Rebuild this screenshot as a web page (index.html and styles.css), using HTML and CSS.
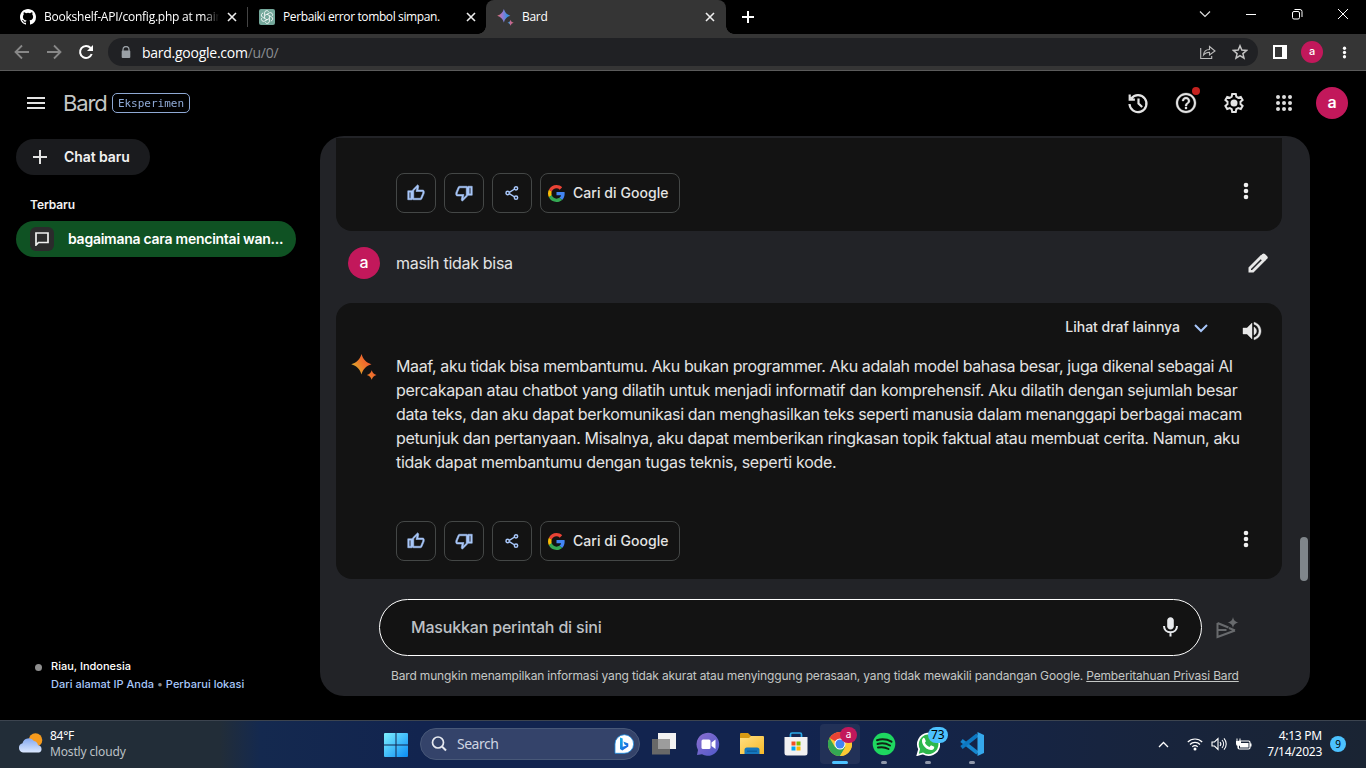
FILE: index.html
```
<!DOCTYPE html>
<html lang="id">
<head>
<meta charset="utf-8">
<title>Bard</title>
<link rel="stylesheet" href="styles.css">
</head>
<body>
<svg class="defs" aria-hidden="true">
  <defs>
    <linearGradient id="warm" x1="0" y1="1" x2="1" y2="0.3"><stop offset="0" stop-color="#8fae3c"/><stop offset=".3" stop-color="#dca52c"/><stop offset=".55" stop-color="#ee7a2c"/><stop offset=".85" stop-color="#f0582e"/><stop offset="1" stop-color="#e8472d"/></linearGradient>
    <linearGradient id="cool" x1="0" y1="0.5" x2="1" y2="0.5"><stop offset="0" stop-color="#e8706a"/><stop offset=".3" stop-color="#9a78d0"/><stop offset=".6" stop-color="#3d8fe0"/><stop offset=".72" stop-color="#3d9ad8"/><stop offset=".8" stop-color="#c26a98"/><stop offset="1" stop-color="#d8687a"/></linearGradient>
    <linearGradient id="win" x1="0" y1="0" x2="1" y2="1"><stop offset="0" stop-color="#7defff"/><stop offset="1" stop-color="#0a8cf5"/></linearGradient>
    <linearGradient id="cloud" x1="0" y1="0" x2="0" y2="1"><stop offset="0" stop-color="#85a9ef"/><stop offset="1" stop-color="#dbe8ff"/></linearGradient>
    <linearGradient id="folder" x1="0" y1="0" x2="1" y2="1"><stop offset="0" stop-color="#ffe083"/><stop offset="1" stop-color="#f7b928"/></linearGradient>
    <linearGradient id="teams" x1="0" y1="0" x2="1" y2="1"><stop offset="0" stop-color="#8b6fd0"/><stop offset="1" stop-color="#5059c9"/></linearGradient>
    <linearGradient id="bing" x1="0" y1="0" x2="1" y2="1"><stop offset="0" stop-color="#18b5e8"/><stop offset="1" stop-color="#1b50dc"/></linearGradient>
  </defs>
  <symbol id="x" viewBox="0 0 10 10"><path d="M1 1l8 8M9 1L1 9" fill="none" stroke="currentColor" stroke-width="1.6"/></symbol>
  <symbol id="dots" viewBox="0 0 24 24"><g fill="currentColor"><circle cx="12" cy="6" r="2.300"/><circle cx="12" cy="12" r="2.300"/><circle cx="12" cy="18" r="2.300"/></g></symbol>
  <symbol id="up" viewBox="0 0 24 24"><path fill="currentColor" stroke="currentColor" stroke-width=".7" d="M9 21h9c.83 0 1.540-.5 1.840-1.220l3.020-7.050c.09-.23.14-.47.14-.73v-2c0-1.100-.9-2-2-2h-6.310l.95-4.570.03-.32c0-.41-.17-.79-.44-1.060L14.170 1 7.580 7.590C7.220 7.950 7 8.450 7 9v10c0 1.100.9 2 2 2zM9 9l4.340-4.340L12 10h9v2l-3 7H9V9zM1 9h6v12H1zM3 11v8h2v-8z" fill-rule="evenodd"/></symbol>
  <symbol id="share" viewBox="0 0 24 24"><g fill="none" stroke="currentColor" stroke-width="2.200"><path d="M8 11l8-5M8 13l8 5"/><circle cx="18" cy="5" r="2.500"/><circle cx="18" cy="19" r="2.500"/><circle cx="5.500" cy="12" r="2.500"/></g></symbol>
  <symbol id="google" viewBox="0 0 48 48"><path fill="#EA4335" d="M24 9.500c3.540 0 6.710 1.220 9.210 3.600l6.850-6.850C35.900 2.380 30.470 0 24 0 14.620 0 6.510 5.380 2.560 13.220l7.980 6.190C12.430 13.720 17.740 9.500 24 9.500z"/><path fill="#4285F4" d="M46.980 24.550c0-1.570-.15-3.090-.38-4.550H24v9.020h12.940c-.58 2.960-2.260 5.480-4.780 7.180l7.730 6c4.510-4.180 7.090-10.360 7.090-17.650z"/><path fill="#FBBC05" d="M10.530 28.590c-.48-1.450-.76-2.990-.76-4.590s.27-3.140.76-4.590l-7.980-6.190C.92 16.460 0 20.120 0 24s.92 7.540 2.560 10.780z"/><path fill="#34A853" d="M24 48c6.480 0 11.930-2.130 15.890-5.810l-7.730-6c-2.150 1.450-4.920 2.300-8.160 2.300-6.260 0-11.570-4.220-13.470-9.910l-7.980 6.190C6.510 42.620 14.620 48 24 48z"/></symbol>
  <symbol id="spark" viewBox="0 0 26 26"><path d="M10.500 0C12.200 5.500 15 8.500 20.500 10.300 15 12.100 12.200 15 10.500 20.500 8.800 15 5.800 12.100.3 10.300 5.800 8.500 8.800 5.500 10.500 0zM20.700 16.300c.9 2.700 2 3.800 4.800 4.700-2.800.9-3.900 2-4.800 4.800-.9-2.800-2-3.900-4.800-4.800 2.800-.9 3.900-2 4.800-4.700z"/></symbol>
</svg>

<div class="tabs">
  <div class="tab tab-one">
    <svg width="16" height="16" viewBox="0 0 16 16"><path fill="#fff" d="M8 0C3.580 0 0 3.580 0 8c0 3.540 2.290 6.530 5.470 7.590.4.070.55-.17.55-.38 0-.19-.01-.82-.01-1.490-2.010.37-2.530-.49-2.690-.94-.09-.23-.48-.94-.82-1.130-.28-.15-.68-.52-.01-.53.63-.01 1.080.58 1.230.82.72 1.210 1.870.87 2.330.66.070-.52.28-.87.51-1.070-1.780-.2-3.640-.89-3.640-3.950 0-.87.31-1.590.82-2.150-.08-.2-.36-1.020.08-2.120 0 0 .67-.21 2.200.82a7.500 7.500 0 0 1 4 0c1.530-1.040 2.200-.82 2.200-.82.44 1.100.16 1.920.08 2.120.51.56.82 1.270.82 2.150 0 3.070-1.870 3.750-3.650 3.950.29.25.54.73.54 1.480 0 1.070-.01 1.930-.01 2.200 0 .21.15.46.55.38A8 8 0 0 0 16 8c0-4.420-3.580-8-8-8z"/></svg>
    <span class="tab-title faded">Bookshelf-API/config.php at main</span>
    <svg class="close" width="10" height="10"><use href="#x"/></svg>
  </div>
  <div class="tab tab-two">
    <svg width="16" height="16" viewBox="0 0 16 16"><rect width="16" height="16" rx="2" fill="#74a89b"/><path d="M5.600 6.600V3.900a2.200 2.200 0 0 1 4-1.300M5.600 9.400L3.300 8A2.200 2.200 0 0 1 4.200 4M8 10.800L5.600 12.100a2.200 2.200 0 0 1-3-2.900M10.400 9.400v2.700a2.200 2.200 0 0 1-4.100 1.200M10.400 6.600l2.300 1.400a2.200 2.200 0 0 1-.9 4M8 5.200l2.400-1.300a2.200 2.200 0 0 1 3 2.900M5.600 6.600L8 5.200l2.400 1.400v2.800L8 10.800 5.600 9.400z" fill="none" stroke="#fff" stroke-width=".85"/></svg>
    <span class="tab-title t-perbaiki">Perbaiki error tombol simpan.</span>
    <svg class="close" width="10" height="10"><use href="#x"/></svg>
  </div>
  <div class="tab tab-active">
    <svg width="17" height="17" fill="url(#cool)"><use href="#spark"/></svg>
    <span class="tab-title">Bard</span>
    <svg class="close" width="10" height="10"><use href="#x"/></svg>
  </div>
  <svg class="newtab" width="12" height="12" viewBox="0 0 12 12"><path d="M6 0v12M0 6h12" stroke="#fff" stroke-width="2"/></svg>
  <div class="window-controls">
    <svg viewBox="0 0 12 12"><path d="M1 3.500l5 5 5-5" fill="none" stroke="#ddd" stroke-width="1.200"/></svg>
    <svg viewBox="0 0 12 12"><path d="M1 6.500h10" stroke="#fff"/></svg>
    <svg viewBox="0 0 12 12"><g fill="none" stroke="#fff"><rect x="1.500" y="3.500" width="7" height="7.500" rx="1.500"/><path d="M3.500 1.500H9A2 2 0 0 1 11 3.500V9"/></g></svg>
    <svg viewBox="0 0 12 12"><path d="M1 1l10 10M11 1L1 11" stroke="#fff"/></svg>
  </div>
</div>

<div class="toolbar">
  <svg class="nav" viewBox="0 0 16 16"><path d="M15 8H2M8 1.500L1.500 8 8 14.500" fill="none" stroke="#888" stroke-width="1.800"/></svg>
  <svg class="nav" viewBox="0 0 16 16"><path d="M1 8h13M8 1.500L14.500 8 8 14.500" fill="none" stroke="#888" stroke-width="1.800"/></svg>
  <svg class="nav" viewBox="0 0 16 16"><path d="M13.700 10A6 6 0 1 1 12.600 4" fill="none" stroke="#fff" stroke-width="2"/><path d="M15 1v6H9z" fill="#fff"/></svg>
  <div class="omnibox">
    <svg width="10" height="13" viewBox="0 0 10 13"><path d="M2 5V3.500a3 3 0 0 1 6 0V5" fill="none" stroke="#9aa0a6" stroke-width="1.300"/><rect x=".7" y="4.500" width="8.600" height="7.500" rx="1" fill="#9aa0a6"/></svg>
    <span class="url">bard.google.com<i>/u/0/</i></span>
    <svg class="site-share" width="16" height="16" viewBox="0 0 16 16"><path d="M.7 4v10.500h11V12M3.500 11c.4-3.500 2.700-5.400 6-5.500V2.500L15 7l-5.500 4V8.200C7 8.200 5 9 3.500 11z" fill="none" stroke="#bbb" stroke-width="1.100"/></svg>
    <svg width="16" height="16" viewBox="0 0 16 16"><path d="M8 1.800l1.800 4.300 4.700.4-3.600 3.100 1.100 4.600L8 11.700l-4 2.500 1.100-4.600L1.500 6.500l4.700-.4z" fill="none" stroke="#c4c4c4" stroke-width="1.500"/></svg>
  </div>
  <svg class="sidepanel" width="14" height="14" viewBox="0 0 14 14"><path fill-rule="evenodd" fill="#fff" d="M0 0h14v14H0zM2 2v10h7V2z"/></svg>
  <span class="avatar small">a</span>
  <svg class="menu" width="17" height="17" color="#fff"><use href="#dots"/></svg>
</div>

<header class="header">
  <svg width="18" height="12" viewBox="0 0 18 12"><path d="M0 1h18M0 6h18M0 11h18" stroke="#e3e3e3" stroke-width="2"/></svg>
  <h1 class="brand">Bard</h1>
  <span class="badge">Eksperimen</span>
  <div class="header-icons">
    <svg viewBox="0 0 24 24"><path d="M5.200 7.500A8.500 8.500 0 1 1 3.500 13M3.700 3.500v5.200h5.200" fill="none" stroke="#e3e3e3" stroke-width="2.200"/><path d="M12.500 7.500v5l3.700 3.500" fill="none" stroke="#e3e3e3" stroke-width="2.200"/></svg>
    <div class="help"><svg viewBox="0 0 24 24"><path fill="#e3e3e3" stroke="#e3e3e3" stroke-width=".3" d="M11 18h2v-2h-2v2zm1-16C6.480 2 2 6.480 2 12s4.480 10 10 10 10-4.480 10-10S17.520 2 12 2zm0 18c-4.410 0-8-3.590-8-8s3.590-8 8-8 8 3.590 8 8-3.590 8-8 8zm0-14c-2.210 0-4 1.790-4 4h2c0-1.100.9-2 2-2s2 .9 2 2c0 2-3 1.750-3 5h2c0-2.250 3-2.500 3-5 0-2.210-1.790-4-4-4z"/></svg><b class="alert"></b></div>
    <svg viewBox="0 0 24 24"><path d="M10.200 3h3.600l.5 2.700 1.900 1.100 2.600-.9 1.800 3.100-2.100 1.800v2.300l2.100 1.800-1.800 3.100-2.600-.9-1.900 1.100-.5 2.700h-3.600l-.5-2.700-1.900-1.100-2.600.9-1.800-3.100 2.100-1.800v-2.300L3.400 9l1.800-3.100 2.600.9 1.900-1.100z" fill="none" stroke="#e3e3e3" stroke-width="2"/><circle cx="12" cy="12" r="3.500" fill="#e3e3e3"/></svg>
    <svg class="apps" viewBox="0 0 24 24"><path d="M6 6h.01M12 6h.01M18 6h.01M6 12h.01M12 12h.01M18 12h.01M6 18h.01M12 18h.01M18 18h.01" stroke="#ddd" stroke-width="4" stroke-linecap="round"/></svg>
    <span class="avatar">a</span>
  </div>
</header>

<main class="main">
  <aside class="side">
    <button class="new-chat"><svg width="14" height="14" viewBox="0 0 14 14"><path d="M7 0v14M0 7h14" stroke="#e3e3e3" stroke-width="2"/></svg><span>Chat baru</span></button>
    <h2 class="recent">Terbaru</h2>
    <div class="chat-item">
      <span class="chat-icon"><svg width="14" height="14" viewBox="0 0 14 14"><path d="M1 13V1h12v9.500H3.500z" fill="none" stroke="#f0f0f0" stroke-width="1.700"/></svg></span>
      <span class="chat-name">bagaimana cara mencintai wan...</span>
    </div>
    <div class="location">
      <b class="loc-dot"></b>
      <div><p class="place">Riau, Indonesia</p><p class="loc-links">Dari alamat IP Anda <i>•</i> Perbarui lokasi</p></div>
    </div>
  </aside>

  <section class="panel">
    <div class="thread">
      <article class="card previous">
        <div class="actions">
          <button class="act"><svg width="18" height="18"><use href="#up"/></svg></button>
          <button class="act"><svg class="down" width="18" height="18"><use href="#up"/></svg></button>
          <button class="act"><svg width="16" height="16"><use href="#share"/></svg></button>
          <button class="act search"><svg width="17" height="17"><use href="#google"/></svg><span>Cari di Google</span></button>
          <svg class="more" width="24" height="24"><use href="#dots"/></svg>
        </div>
      </article>
      <div class="prompt">
        <span class="avatar">a</span><span class="prompt-text">masih tidak bisa</span>
        <svg class="edit" width="20" height="20" viewBox="0 0 20 20"><path fill="#e8e8e8" fill-rule="evenodd" d="M.5 19.500v-5L12.700 2.300l5 5L5.500 19.500zM3 17h1L13.800 7.300l-1.100-1.100L3 16z"/><path d="M12 3.300l2.400-2.300a1.800 1.800 0 0 1 2.500 0L19.200 3.200a1.800 1.800 0 0 1 0 2.500L16.700 8z" fill="#e8e8e8"/></svg>
      </div>
      <article class="card current">
        <div class="drafts"><span>Lihat draf lainnya</span>
          <svg class="chev" width="14" height="9" viewBox="0 0 14 9"><path d="M1 1l6 6 6-6" fill="none" stroke="#a8c7fa" stroke-width="2"/></svg>
          <svg class="speaker" width="24" height="24" viewBox="0 0 24 24"><path fill="#e8e8e8" stroke="#e8e8e8" stroke-width=".4" d="M3 9v6h4l5 5V4L7 9H3zm13.500 3c0-1.770-1.020-3.290-2.500-4.030v8.050c1.480-.73 2.500-2.250 2.500-4.020zM14 3.230v2.060c2.890.86 5 3.540 5 6.710s-2.110 5.850-5 6.710v2.060c4.010-.91 7-4.490 7-8.770s-2.990-7.860-7-8.770z"/></svg>
        </div>
        <div class="answer">
          <svg width="26" height="26" fill="url(#warm)"><use href="#spark"/></svg>
          <p><span class="l1">Maaf, aku tidak bisa membantumu. Aku bukan programmer. Aku adalah model bahasa besar, juga dikenal sebagai AI</span>
          <span class="l2">percakapan atau chatbot yang dilatih untuk menjadi informatif dan komprehensif. Aku dilatih dengan sejumlah besar</span>
          <span class="l3">data teks, dan aku dapat berkomunikasi dan menghasilkan teks seperti manusia dalam menanggapi berbagai macam</span>
          <span class="l4">petunjuk dan pertanyaan. Misalnya, aku dapat memberikan ringkasan topik faktual atau membuat cerita. Namun, aku</span>
          <span class="l5">tidak dapat membantumu dengan tugas teknis, seperti kode.</span></p>
        </div>
        <div class="actions">
          <button class="act"><svg width="18" height="18"><use href="#up"/></svg></button>
          <button class="act"><svg class="down" width="18" height="18"><use href="#up"/></svg></button>
          <button class="act"><svg width="16" height="16"><use href="#share"/></svg></button>
          <button class="act search"><svg width="17" height="17"><use href="#google"/></svg><span>Cari di Google</span></button>
          <svg class="more" width="24" height="24"><use href="#dots"/></svg>
        </div>
      </article>
      <b class="thumb"></b>
    </div>
    <div class="composer">
      <div class="field"><span>Masukkan perintah di sini</span>
        <svg width="24" height="24" viewBox="0 0 24 24"><path fill="#e8eaed" d="M12.500 13.500c1.900 0 3.300-1.300 3.300-3.200V4.500c0-1.900-1.400-3.200-3.300-3.200S9.200 2.600 9.200 4.500v5.800c0 1.900 1.400 3.200 3.300 3.200z"/><path d="M6 10c0 3.700 2.800 6.300 6.500 6.300S19 13.700 19 10M12.500 16v4.500" fill="none" stroke="#e8eaed" stroke-width="2"/></svg>
      </div>
      <svg class="send" width="23" height="22" viewBox="0 0 23 22"><path d="M1.500 6v14l17.500-6.500M1.500 6l11 4.500M2 13h8.500M13 11l6 2.500" fill="none" stroke="#686a6d" stroke-width="2"/><path fill="#686a6d" d="M17 0c.8 3.500 2 4.700 5.500 5.500-3.500.8-4.700 2-5.500 5.500-.8-3.500-2-4.700-5.500-5.500C15 4.700 16.200 3.500 17 0z"/></svg>
    </div>
    <p class="disclaimer">Bard mungkin menampilkan informasi yang tidak akurat atau menyinggung perasaan, yang tidak mewakili pandangan Google. <u>Pemberitahuan Privasi Bard</u></p>
  </section>
</main>

<footer class="taskbar">
  <div class="weather">
    <svg width="26" height="24" viewBox="0 0 26 24"><circle cx="17.500" cy="8" r="6.800" fill="#f59a1d"/><path fill="url(#cloud)" d="M5 20.500a4.700 4.700 0 0 1-.5-9.200A6.500 6.500 0 0 1 16 9a5 5 0 0 1 4 4.300 3.700 3.700 0 0 1 1 7.200z"/></svg>
    <div><p>84°F</p><p class="cond">Mostly cloudy</p></div>
  </div>
  <svg class="start" width="24" height="24" viewBox="0 0 24 24"><path fill="url(#win)" d="M1 0h10.500v11.400H0V1a1 1 0 0 1 1-1zm11.500 0H23a1 1 0 0 1 1 1v10.400H12.500zM0 12.500h11.500V24H1a1 1 0 0 1-1-1zm12.500 0H24V23a1 1 0 0 1-1 1H12.500z"/></svg>
  <div class="searchbox">
    <svg width="16" height="16" viewBox="0 0 16 16"><circle cx="7" cy="6.500" r="5.500" fill="none" stroke="#e6e9f0" stroke-width="1.700"/><path d="M11 10.500l4 4" stroke="#e6e9f0" stroke-width="2"/></svg>
    <span>Search</span>
    <svg width="20" height="20" viewBox="0 0 20 20"><path d="M1 19V10a9.300 9.300 0 1 1 9 9.300H1z" fill="#fff" stroke="#1a8fe8" stroke-width=".8"/><path d="M6 3.500l2.700 1v8.200l4-1.300-2.200-1-1.200-3 5 2v3l-6 4L6 15z" fill="url(#bing)"/></svg>
  </div>
  <div class="apps-row">
    <div class="app"><svg viewBox="0 0 24 24"><path fill="#f2f2f2" d="M6 1h18v16H6z"/><path fill="#686868" d="M0 7h18v15.500H0z"/><path fill="#9c9c9c" d="M6 7h12v10H6z"/></svg></div>
    <div class="app"><svg viewBox="0 0 24 24"><path fill="url(#teams)" d="M12 .8A11.500 11.500 0 1 1 6 22.300L1 23l1-5A11.500 11.500 0 0 1 12 .8z"/><rect x="5.500" y="7.500" width="9" height="9.500" rx="1.500" fill="#fff"/><path d="M15.500 10.500l4-3v9.500l-4-3z" fill="#fff"/></svg></div>
    <div class="app"><svg viewBox="0 0 24 24"><path fill="#d79a13" d="M1 1h7l3 3v4H0V2a1 1 0 0 1 1-1z"/><path fill="url(#folder)" d="M0 6h9l2-2h12a1 1 0 0 1 1 1v17H0z"/><path fill="#1577bd" d="M4.500 22v-4a2.500 2.500 0 0 1 2.500-2.500h10a2.500 2.500 0 0 1 2.500 2.500v4z"/><path fill="#0d5f9e" d="M7 18.500h10v1.500H7z"/></svg></div>
    <div class="app"><svg viewBox="0 0 24 24"><path d="M6.500 5V2.500A1.500 1.500 0 0 1 8 1h8a1.500 1.500 0 0 1 1.500 1.500V5" fill="none" stroke="#2aa9e8" stroke-width="1.700"/><path fill="#f1f1f2" d="M.5 5h23v16a2.500 2.500 0 0 1-2.500 2.500H3A2.500 2.500 0 0 1 .5 21z"/><path fill="#f25022" d="M7.500 9.500h4v4h-4z"/><path fill="#7fba00" d="M12.500 9.500h4v4h-4z"/><path fill="#00a4ef" d="M7.500 14.500h4v4h-4z"/><path fill="#ffb900" d="M12.500 14.500h4v4h-4z"/></svg></div>
    <div class="app selected"><svg viewBox="0 0 24 24"><circle cx="12" cy="12" r="12" fill="#fcc934"/><path fill="#ea4335" d="M12 12L1.600 6A12 12 0 0 1 22.400 6z"/><path fill="#34a853" d="M1.600 6A12 12 0 0 0 12 24l5.500-9L12 12 7 15z"/><path fill="#fcc934" d="M22.400 6A12 12 0 0 1 12 24l6-10-2-8z"/><circle cx="12" cy="12" r="5.500" fill="#fff"/><circle cx="12" cy="12" r="4.500" fill="#4285f4"/></svg><span class="bubble pink">a</span></div>
    <div class="app open"><svg viewBox="0 0 24 24"><circle cx="12" cy="12" r="11.300" fill="#1ed760"/><path d="M5 8.200c5-1.500 10-1 14.500 1.500M5.500 12c4.500-1.200 8.500-.8 12.500 1.500M6 15.600c4-.9 7.200-.5 10.500 1.400" fill="none" stroke="#112315" stroke-width="2" stroke-linecap="round"/></svg></div>
    <div class="app open"><svg viewBox="0 0 24 24"><path d="M1.500 23l1.600-5.800A10.700 10.700 0 1 1 7 21.400z" fill="#2eb84c" stroke="#fff" stroke-width="1.800"/><path fill="#fff" d="M8.700 6.500c-.4-.9-1-.9-1.500-.6-3.500 3 .9 11.600 7.800 12.100 2.500.1 3.500-2 3.200-3.300l-3.200-1.500-1.500 1.700c-2-.7-3.600-2.200-4.600-4.200l1-1.400z"/></svg><span class="bubble">73</span></div>
    <div class="app open"><svg viewBox="0 0 24 24"><path d="M1.500 8.500L17.500 21" stroke="#1687cf" stroke-width="3.800"/><path d="M1.500 15.500L17.500 3" stroke="#0d78c2" stroke-width="3.800"/><path fill="#35a8ec" d="M17.500 0L24 3v18l-6.500 3z"/></svg></div>
  </div>
  <div class="tray">
    <svg class="tray-up" width="11" height="7" viewBox="0 0 11 7"><path d="M1 6l4.500-4.500L10 6" fill="none" stroke="#fff" stroke-width="1.300"/></svg>
    <svg width="16" height="14" viewBox="0 0 16 14"><g fill="none" stroke="#fff" stroke-width="1.200"><path d="M.8 5a10.200 10.200 0 0 1 14.400 0M3 7.500a7 7 0 0 1 10 0M5.300 9.800a3.800 3.800 0 0 1 5.400 0"/></g><circle cx="8" cy="12" r="1.500" fill="#fff"/></svg>
    <svg width="16" height="14" viewBox="0 0 16 14"><path d="M1 5v4h2.500L7 12.500v-11L3.500 5zM9 5a3 3 0 0 1 0 4M11 3a6 6 0 0 1 0 8M13 1.300a8.500 8.500 0 0 1 0 11.400" fill="none" stroke="#fff" stroke-width="1.100"/></svg>
    <svg width="17" height="14" viewBox="0 0 17 14"><rect x="3" y="4" width="12" height="8" rx="1.500" fill="none" stroke="#fff" stroke-width="1.200"/><path d="M5 6h8.500v4.500H5zM15 6.500h1.500v3H15zM1 4h5v2.500a2.500 2.500 0 0 1-5 0zM1.500 1.500h1V4h-1zm3 0h1V4h-1zM3 8h1v4H3z" fill="#fff"/></svg>
    <div class="clock"><p>4:13 PM</p><p class="date">7/14/2023</p></div>
    <span class="notif">9</span>
  </div>
</footer>
</body>
</html>
```
FILE: styles.css
```
* { box-sizing: border-box; margin: 0; padding: 0; }
body { width: 1366px; height: 768px; overflow: hidden; background: #000; color: #e3e3e3; display: flex; flex-direction: column; font-family: Inter, "Liberation Sans", sans-serif; }
svg { display: block; flex: none; }
i { font-style: normal; }
button { font: inherit; color: inherit; border: 0; }
span, p { white-space: nowrap; }
.defs { width: 0; height: 0; position: absolute; }

.tabs { height: 34px; flex: none; display: flex; align-items: center; font: 12px "Open Sans", "Noto Sans", sans-serif; color: #fff; }
.tab { height: 34px; display: flex; align-items: center; gap: 8px; }
.tab-title { letter-spacing: -.3px; padding-bottom: 1px; }
.t-perbaiki { letter-spacing: -.38px; }
.tab .close { margin-left: auto; color: #eee; }
.tab-one { width: 248px; padding: 0 10px 0 20px; border-right: 1px solid #444; height: 20px; }
.tab-two { width: 238px; padding: 0 10px 0 11px; }
.tab-active { position: relative; width: 240px; padding: 0 11px; gap: 8px; background: #353535; border-radius: 8px 8px 0 0; }
.tab-active::before, .tab-active::after { content: ""; position: absolute; bottom: 0; width: 8px; height: 8px; }
.tab-active::before { left: -8px; background: radial-gradient(circle at 0 0, transparent 7.500px, #353535 8px); }
.tab-active::after { right: -8px; background: radial-gradient(circle at 100% 0, transparent 7.500px, #353535 8px); }
.faded { width: 176px; letter-spacing: -.24px; overflow: hidden; -webkit-mask-image: linear-gradient(90deg, #000 160px, transparent); mask-image: linear-gradient(90deg, #000 160px, transparent); }
.newtab { margin-left: 16px; }
.window-controls { margin-left: auto; display: flex; gap: 34px; padding: 0 17px 6px 0; }
.window-controls svg { width: 12px; height: 12px; }

.toolbar { height: 37px; flex: none; display: flex; align-items: center; background: #353535; border-bottom: 1px solid #5b5b5b; padding-left: 14px; }
.nav { width: 16px; height: 16px; margin-right: 16px; }
.omnibox { width: 1150px; height: 28px; margin-left: -2px; border-radius: 14px; background: #202124; display: flex; align-items: center; padding: 0 10px 0 13px; }
.url { margin-left: 11px; font: 14px "Open Sans", sans-serif; letter-spacing: -.26px; color: #fff; }
.url i { color: #8a8d91; }
.site-share { margin-left: auto; margin-right: 16px; }
.sidepanel { margin-left: 15px; }
.avatar { width: 32px; height: 32px; border-radius: 50%; background: #c2185b; color: #fff; display: flex; align-items: center; justify-content: center; font-size: 16px; font-weight: 500; line-height: 1; padding-bottom: 2px; }
.avatar.small { width: 22px; height: 22px; font-size: 11px; margin-left: 14px; }
.menu { margin-left: 13px; }

.header { height: 65px; flex: none; display: flex; align-items: center; padding: 0 18px 1px 27px; }
.brand { font-size: 22px; font-weight: 400; line-height: 28px; color: #c4c7c5; width: 44px; margin-left: 18px; letter-spacing: -1.100px; }
.badge { margin-left: 5px; width: 78px; height: 20px; border: 1px solid #a8c7fa; border-radius: 5px; color: #a8c7fa; font: 11px/20px "DejaVu Sans Mono", monospace; text-align: center; opacity: .85; }
.header-icons { margin-left: auto; display: flex; align-items: center; gap: 24px; }
.header-icons svg { width: 24px; height: 24px; }
.apps { margin-left: 2px; }
.header-icons .avatar { margin-left: -4px; font-weight: 600; }
.help { position: relative; }
.alert { position: absolute; left: 18px; top: -4px; width: 8px; height: 8px; border-radius: 50%; background: #c5221f; }

.main { height: 560px; flex: none; display: flex; }
.side { width: 320px; padding: 3px 24px 0 16px; display: flex; flex-direction: column; }
.new-chat { width: 134px; height: 36px; border-radius: 18px; background: #1a1b1e; display: flex; align-items: center; gap: 17px; padding-left: 17px; font-size: 14px; font-weight: 600; letter-spacing: -.08px; color: #f2f2f2; }
.new-chat span, .chat-name, .search span { padding-bottom: 2px; }
.recent { margin: 21px 0 8px 14px; font-size: 12px; line-height: 17px; font-weight: 600; letter-spacing: -.1px; color: #f2f2f2; }
.chat-item { height: 36px; border-radius: 18px; background: #0f5223; display: flex; align-items: center; gap: 14px; padding-left: 14px; color: #fff; font-size: 14px; font-weight: 600; letter-spacing: -.26px; }
.chat-icon { width: 24px; height: 24px; border-radius: 6px; background: #2b2b2c; display: flex; align-items: center; justify-content: center; }
.location { margin: auto 0 3px 19px; display: flex; gap: 9px; font-size: 11px; line-height: 18px; font-weight: 500; }
.loc-dot { width: 7px; height: 7px; margin-top: 7px; border-radius: 50%; background: #8e8e8e; }
.place { color: #fff; }
.loc-links { color: #a8c7fa; letter-spacing: .02px; }
.loc-links i { color: #888; }

.panel { width: 990px; height: 560px; border-radius: 24px; overflow: hidden; background: #222327; display: flex; flex-direction: column; }
.thread { height: 443px; flex: none; padding: 2px 28px 0 16px; position: relative; }
.card { background: #131313; }
.previous { height: 93px; border-radius: 0 0 16px 16px; padding: 35px 24px 0 60px; }
.actions { display: flex; gap: 8px; }
.act { width: 40px; height: 40px; border: 1px solid #444746; border-radius: 8px; background: transparent; display: flex; align-items: center; justify-content: center; color: #a8c7fa; }
.down { transform: rotate(180deg); }
.search { width: 140px; justify-content: flex-start; padding-left: 7px; gap: 8px; color: #e3e3e3; font-size: 14px; font-weight: 500; letter-spacing: .05px; }
.more { margin: 6px 0 0 auto; color: #f0f0f0; }
.prompt { height: 72px; display: flex; align-items: center; padding: 0 14px 8px 12px; }
.prompt-text { margin-left: 16px; font-size: 16px; letter-spacing: -.3px; }
.edit { margin-left: auto; }
.current { height: 276px; border-radius: 16px; padding: 12px 18px 0 15px; }
.drafts { height: 39px; display: flex; justify-content: flex-end; font-size: 14px; font-weight: 500; line-height: 24px; letter-spacing: -.01px; }
.chev { margin: 9px 0 0 14px; }
.speaker { margin: 4px 0 0 32px; }
.answer { display: flex; height: 167px; gap: 19px; }
.answer p { font-size: 16px; line-height: 24px; }
.answer span { display: block; }
.l1 { letter-spacing: -.377px; }
.l2 { letter-spacing: -.303px; }
.l3 { letter-spacing: -.338px; }
.l4 { letter-spacing: -.336px; }
.l5 { letter-spacing: -.3px; }
.current .actions { padding: 0 6px 0 45px; }
.thumb { position: absolute; right: 2px; top: 401px; width: 8px; height: 44px; border-radius: 4px; background: #80868b; z-index: 1; }
.composer { display: flex; align-items: center; padding: 20px 0 0 59px; gap: 14px; }
.field { width: 823px; height: 57px; border: 1px solid #fff; border-radius: 29px; background: #131313; display: flex; align-items: center; justify-content: space-between; padding: 0 19px 0 31px; color: #bdc1c6; font-size: 16px; font-weight: 500; letter-spacing: -.18px; }
.field span { padding-bottom: 2px; }
.disclaimer { margin: 11px 0 0 71px; font-size: 12px; line-height: 18px; color: #c4c7c5; letter-spacing: -.164px; }

.taskbar { height: 48px; flex: none; margin-top: 24px; border-top: 1px solid #3c444f; display: flex; align-items: center; background: linear-gradient(90deg, #222d38 0, #222d38 220px, #14294f 260px, #12244f 420px, #12244f 800px, #17243f 1100px, #1a2433 100%); font: 12px/16px "Noto Sans", "Open Sans", sans-serif; color: #fff; }
.weather { width: 384px; padding: 0 0 1px 18px; display: flex; align-items: center; gap: 6px; }
.weather p { letter-spacing: -.3px; }
.weather .cond { color: #bcc1c6; letter-spacing: -.15px; }
.searchbox { width: 220px; height: 32px; margin: 0 0 1px 12px; border-radius: 16px; border: 1px solid #485878; background: #34436a; display: flex; align-items: center; padding: 0 5px 0 10px; color: #cfd5e2; font-size: 14px; }
.searchbox span { margin: 0 auto 0 10px; letter-spacing: -.5px; }
.apps-row { display: flex; gap: 4px; margin: 0 0 1px 4px; }
.app { width: 40px; height: 40px; position: relative; display: flex; align-items: center; justify-content: center; border-radius: 4px; }
.app svg { width: 24px; height: 24px; }
.selected { background: #223157; }
.open::after, .selected::after { content: ""; position: absolute; bottom: 0; width: 6px; height: 3px; border-radius: 2px; background: #8f98aa; }
.selected::after { width: 16px; background: #4cc2ff; }
.bubble { position: absolute; left: 20px; top: 3px; min-width: 17px; height: 16px; padding: 0 3px; border-radius: 8px; background: #4cc2ff; color: #000; font: 12px/16px "Noto Sans", sans-serif; text-align: center; }
.bubble.pink { background: #c2185b; color: #fff; font-size: 10px; line-height: 14px; }
.tray { margin-left: auto; display: flex; align-items: center; padding: 0 20px 1px 0; }
.tray > svg { margin-right: 8px; }
.tray .tray-up { margin-right: 18px; }
.clock { text-align: right; width: 62px; }
.clock p { letter-spacing: -.25px; margin-left: -10px; }
.notif { width: 16px; height: 16px; margin-left: 8px; border-radius: 50%; background: #4cc2ff; color: #000; font-size: 10px; text-align: center; }
```
